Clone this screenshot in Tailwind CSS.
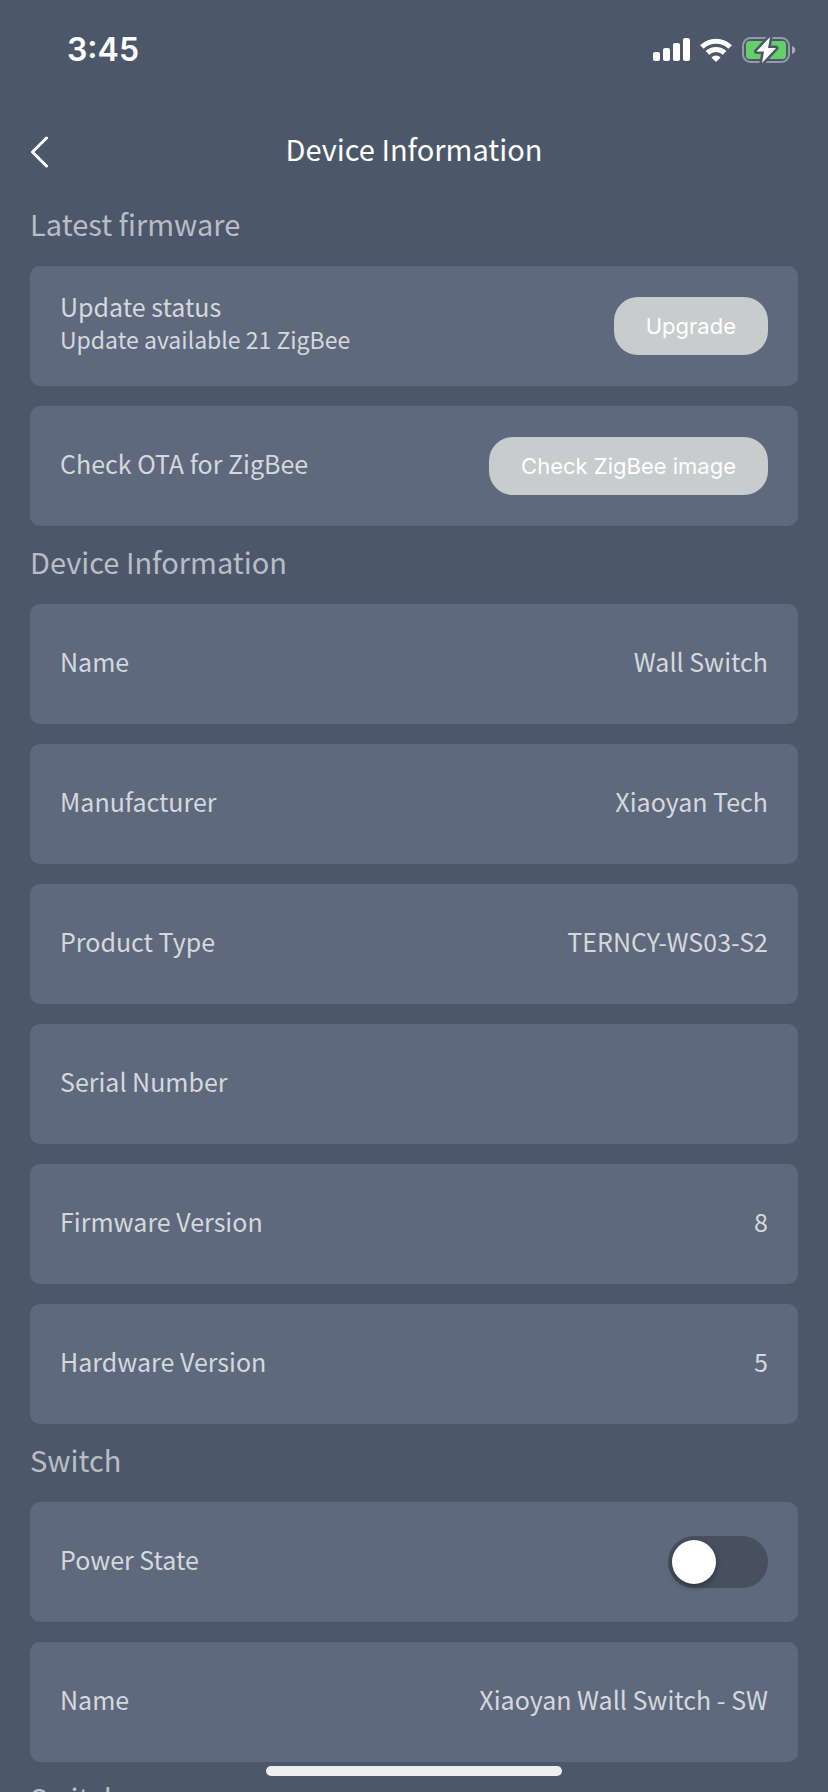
<!DOCTYPE html>
<html lang="en">
<head>
<meta charset="utf-8">
<meta name="viewport" content="width=device-width, initial-scale=1">
<title>Device Information</title>
<script src="https://cdn.jsdelivr.net/npm/@tailwindcss/browser@4"></script>
</head>
<body class="flex h-screen flex-col bg-[#4d576a] font-['Noto_Sans_CJK_SC',sans-serif] text-[25px] leading-[33px] text-[#d5d8dc]">
  <!-- Status bar -->
  <div class="flex h-[100px] shrink-0 items-center justify-between pr-8 pl-[67px] text-white">
    <span class="font-['Inter',sans-serif] text-[32px] leading-8 font-semibold">3:45</span>
    <div class="flex items-center gap-2.5">
      <svg class="h-6 w-[37px]" viewBox="0 0 37 24" fill="currentColor" aria-label="Signal">
        <rect x="0" y="14" width="7" height="9" rx="2"/><rect x="10" y="10" width="7" height="13" rx="2"/><rect x="20" y="5" width="7" height="18" rx="2"/><rect x="30" y="0" width="7" height="23" rx="2"/>
      </svg>
      <svg class="h-6 w-8" viewBox="0 0 32 24" fill="none" stroke="currentColor" stroke-width="5" aria-label="Wi-Fi">
        <path d="M1.8 9a20.300 20.300 0 0 1 28.400 0"/><path d="M7.4 14.900a12.400 12.400 0 0 1 17.200 0"/><path d="M16 24l-4.600-4.500a6.500 6.500 0 0 1 9.200 0z" fill="currentColor" stroke="none"/>
      </svg>
      <svg class="h-[26px] w-[54px]" viewBox="0 0 54 26" aria-label="Battery charging">
        <rect x="1" y="1" width="46" height="24" rx="7.500" fill="none" stroke="#949aa6" stroke-width="2"/>
        <path d="M50 9v8c4.500-1.600 4.500-6.400 0-8z" fill="#a6abb4"/>
        <rect x="4" y="4" width="40" height="18" rx="3.500" fill="#65cf6a"/>
        <path d="M28 0L14.500 14.500h7.500L20 26 34 11h-8z" fill="#fff" stroke="#4d576a" stroke-width="5" stroke-linejoin="round" paint-order="stroke"/>
      </svg>
    </div>
  </div>

  <!-- Title bar -->
  <header class="grid h-[88px] shrink-0 grid-cols-[1fr_auto_1fr] items-center px-[30px] text-white">
    <button type="button" aria-label="Back" class="justify-self-start pt-4">
      <svg class="h-8 w-[18px]" viewBox="0 0 18 32" fill="none" stroke="currentColor" stroke-width="3" stroke-linecap="round" stroke-linejoin="round"><path d="M16.500 2L2.500 16l14 14"/></svg>
    </button>
    <h1 class="pt-2 text-[29px]">Device Information</h1>
  </header>

  <main class="min-h-0 flex-1 overflow-y-auto px-[30px] [scrollbar-width:none]">
    <section>
      <h2 class="flex h-[78px] items-center pb-2 text-[29px] text-[#b8bdc6]">Latest firmware</h2>
      <div class="flex flex-col gap-5">
        <div class="flex h-[120px] items-center justify-between rounded-[10px] bg-[#5f697d] px-[30px]">
          <div class="pb-1.5"><p>Update status</p><p class="text-[23px]">Update available 21 ZigBee</p></div>
          <button type="button" class="h-[58px] rounded-3xl bg-[#c8cccc] px-8 font-['Inter',sans-serif] text-[22px] text-white">Upgrade</button>
        </div>
        <div class="flex h-[120px] items-center justify-between rounded-[10px] bg-[#5f697d] px-[30px]">
          <p class="pb-1.5">Check OTA for ZigBee</p>
          <button type="button" class="h-[58px] rounded-3xl bg-[#c8cccc] px-8 font-['Inter',sans-serif] text-[22px] text-white">Check ZigBee image</button>
        </div>
      </div>
    </section>

    <section>
      <h2 class="flex h-[78px] items-center pb-2 text-[29px] text-[#b8bdc6]">Device Information</h2>
      <dl class="flex flex-col gap-5">
        <div class="flex h-[120px] items-center justify-between rounded-[10px] bg-[#5f697d] px-[30px] pb-1.5"><dt>Name</dt><dd>Wall Switch</dd></div>
        <div class="flex h-[120px] items-center justify-between rounded-[10px] bg-[#5f697d] px-[30px] pb-1.5"><dt>Manufacturer</dt><dd>Xiaoyan Tech</dd></div>
        <div class="flex h-[120px] items-center justify-between rounded-[10px] bg-[#5f697d] px-[30px] pb-1.5"><dt>Product Type</dt><dd>TERNCY-WS03-S2</dd></div>
        <div class="flex h-[120px] items-center justify-between rounded-[10px] bg-[#5f697d] px-[30px] pb-1.5"><dt>Serial Number</dt><dd></dd></div>
        <div class="flex h-[120px] items-center justify-between rounded-[10px] bg-[#5f697d] px-[30px] pb-1.5"><dt>Firmware Version</dt><dd>8</dd></div>
        <div class="flex h-[120px] items-center justify-between rounded-[10px] bg-[#5f697d] px-[30px] pb-1.5"><dt>Hardware Version</dt><dd>5</dd></div>
      </dl>
    </section>

    <section>
      <h2 class="flex h-[78px] items-center pb-2 text-[29px] text-[#b8bdc6]">Switch</h2>
      <div class="flex flex-col gap-5">
        <div class="flex h-[120px] items-center justify-between rounded-[10px] bg-[#5f697d] px-[30px]">
          <label for="power" class="pb-1.5">Power State</label>
          <input id="power" type="checkbox" role="switch" class="h-[52px] w-[100px] appearance-none rounded-full bg-[#47505f] p-1 before:block before:size-11 before:rounded-full before:bg-white before:shadow-[0_3px_6px_rgba(0,0,0,0.35)] before:content-[''] checked:bg-[#65cf6a] checked:before:ml-auto">
        </div>
        <div class="flex h-[120px] items-center justify-between rounded-[10px] bg-[#5f697d] px-[30px] pb-1.5"><p>Name</p><p>Xiaoyan Wall Switch - SW</p></div>
      </div>
    </section>

    <section>
      <h2 class="flex h-[78px] items-center pb-2 text-[29px] text-[#b8bdc6]">Switch</h2>
    </section>
  </main>

  <!-- Home indicator -->
  <div class="fixed inset-x-0 bottom-4 mx-auto h-2.5 w-[296px] rounded-full bg-[#eeeeee]"></div>
</body>
</html>
